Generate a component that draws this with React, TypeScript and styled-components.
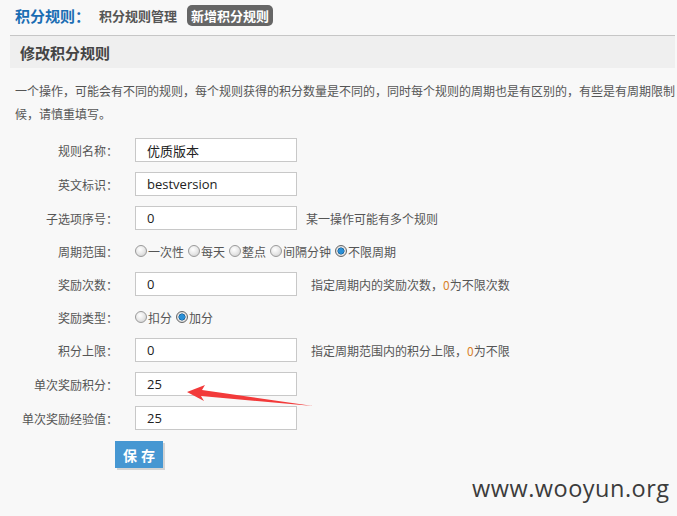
import React from "react";
import styled, { createGlobalStyle } from "styled-components";

const Global = createGlobalStyle`
  html, body { margin: 0; padding: 0; background: #f8f8f8; }
  body { font-family: "Noto Sans CJK SC", "Noto Sans", sans-serif; color: #555; }
  #root { position: relative; width: 677px; height: 516px; overflow: hidden; }
`;

const Header = styled.div`
  display: flex;
  align-items: center;
  height: 31px;
  padding-left: 15px;
`;

const HeaderTitle = styled.span`
  font-size: 15px;
  font-weight: bold;
  color: #1a6db3;
  margin-right: 9px;
`;

const HeaderLink = styled.span<{ $active?: boolean }>`
  font-size: 13px;
  font-weight: bold;
  color: ${(p) => (p.$active ? "#fff" : "#555")};
  background: ${(p) => (p.$active ? "#666" : "transparent")};
  border-radius: 5px;
  padding: ${(p) => (p.$active ? "1px 4px" : "0")};
  height: ${(p) => (p.$active ? "21px" : "auto")};
  line-height: 19px;
  box-sizing: border-box;
  margin-right: 10px;
`;

const Band = styled.div`
  margin: 4px 2px 0 10px;
  border-top: 1px solid #c6c6c6;
  background: #efefef;
  height: 32px;
  display: flex;
  align-items: center;
  padding-left: 10px;
  font-size: 15px;
  font-weight: bold;
  color: #444;
`;

const Desc = styled.div`
  margin-top: 11px;
  padding-left: 15px;
  font-size: 12px;
  line-height: 23px;
  color: #555;
  white-space: nowrap;
`;

const Form = styled.div`
  margin-top: 8px;
  margin-left: 10px;
  display: grid;
  grid-template-columns: 108px auto;
  column-gap: 17px;
`;

const Label = styled.div<{ $h: number }>`
  height: ${(p) => p.$h}px;
  display: flex;
  align-items: center;
  justify-content: flex-end;
  font-size: 12px;
  color: #555;
`;

const Cell = styled.div<{ $h: number }>`
  height: ${(p) => p.$h}px;
  display: flex;
  align-items: center;
`;

const Input = styled.div`
  width: 162px;
  height: 24px;
  box-sizing: border-box;
  border: 1px solid #c8c8c8;
  background: #fff;
  padding-left: 11px;
  display: flex;
  align-items: center;
  font-family: "Open Sans", "Noto Sans CJK SC", sans-serif;
  font-size: 13px;
  color: #222;
`;

const Hint = styled.span<{ $gap: number }>`
  margin-left: ${(p) => p.$gap}px;
  font-size: 12px;
  color: #555;
`;

const Zero = styled.span`
  color: #d9822b;
`;

const RadioItem = styled.span`
  display: inline-flex;
  align-items: center;
  font-size: 12px;
  color: #555;
  margin-right: 4px;
`;

const RadioDot = styled.span<{ $on?: boolean }>`
  display: inline-block;
  width: 12px;
  height: 12px;
  border-radius: 50%;
  box-sizing: border-box;
  border: 1px solid ${(p) => (p.$on ? "#666" : "#9a9a9a")};
  background: ${(p) =>
    p.$on
      ? "radial-gradient(circle at 50% 50%, #2a8fd6 0 2.5px, #0c4f86 3.2px, #e6e6e6 3.8px, #cfcfcf 100%)"
      : "radial-gradient(circle at 40% 35%, #ffffff 0, #e8e8e8 50%, #c8c8c8 100%)"};
  margin-right: 1px;
`;

const ButtonRow = styled.div`
  padding: 6px 0 0 115px;
`;

const SaveButton = styled.button`
  width: 48px;
  height: 27px;
  border: none;
  background: #4697d2;
  color: #fff;
  font-family: "Noto Sans CJK SC", sans-serif;
  font-weight: bold;
  font-size: 14px;
  letter-spacing: 4px;
  padding: 0 0 0 4px;
  box-shadow: 2px 2px 0 #d4d4d4;
`;

const Watermark = styled.div`
  position: absolute;
  left: 472px;
  top: 472px;
  font-family: "Open Sans", sans-serif;
  font-size: 23.5px;
  color: #3c3c3c;
  letter-spacing: 0.5px;
`;

const ArrowSvg = styled.svg`
  position: absolute;
  left: 0;
  top: 0;
  pointer-events: none;
`;

type Row =
  | { kind: "input"; label: string; value: string; hint?: React.ReactNode; gap?: number }
  | { kind: "radio"; label: string; options: { text: string; on?: boolean }[] };

const rows: Row[] = [
  { kind: "input", label: "规则名称：", value: "优质版本" },
  { kind: "input", label: "英文标识：", value: "bestversion" },
  { kind: "input", label: "子选项序号：", value: "0", hint: "某一操作可能有多个规则", gap: 9 },
  {
    kind: "radio",
    label: "周期范围：",
    options: [
      { text: "一次性" },
      { text: "每天" },
      { text: "整点" },
      { text: "间隔分钟" },
      { text: "不限周期", on: true },
    ],
  },
  {
    kind: "input",
    label: "奖励次数：",
    value: "0",
    hint: (
      <>
        指定周期内的奖励次数，<Zero>0</Zero>为不限次数
      </>
    ),
    gap: 14,
  },
  { kind: "radio", label: "奖励类型：", options: [{ text: "扣分" }, { text: "加分", on: true }] },
  {
    kind: "input",
    label: "积分上限：",
    value: "0",
    hint: (
      <>
        指定周期范围内的积分上限，<Zero>0</Zero>为不限
      </>
    ),
    gap: 14,
  },
  { kind: "input", label: "单次奖励积分：", value: "25" },
  { kind: "input", label: "单次奖励经验值：", value: "25" },
];

export default function App() {
  return (
    <>
      <Global />
      <Header>
        <HeaderTitle>积分规则：</HeaderTitle>
        <HeaderLink>积分规则管理</HeaderLink>
        <HeaderLink $active>新增积分规则</HeaderLink>
      </Header>
      <Band>修改积分规则</Band>
      <Desc>
        一个操作，可能会有不同的规则，每个规则获得的积分数量是不同的，同时每个规则的周期也是有区别的，有些是有周期限制
        <br />
        候，请慎重填写。
      </Desc>
      <Form>
        {rows.map((r, i) => {
          const h = r.kind === "input" ? 34 : 32;
          return (
            <React.Fragment key={i}>
              <Label $h={h}>{r.label}</Label>
              <Cell $h={h}>
                {r.kind === "input" ? (
                  <>
                    <Input>{r.value}</Input>
                    {r.hint && <Hint $gap={r.gap ?? 9}>{r.hint}</Hint>}
                  </>
                ) : (
                  r.options.map((o, j) => (
                    <RadioItem key={j}>
                      <RadioDot $on={o.on} />
                      {o.text}
                    </RadioItem>
                  ))
                )}
              </Cell>
            </React.Fragment>
          );
        })}
      </Form>
      <ButtonRow>
        <SaveButton>保存</SaveButton>
      </ButtonRow>
      <Watermark>www.wooyun.org</Watermark>
      <ArrowSvg width="677" height="516" viewBox="0 0 677 516">
        <polygon
          points="187,392 205,385 202,390 313,406 201,396 204,401"
          fill="#f23a3a"
        />
      </ArrowSvg>
    </>
  );
}
